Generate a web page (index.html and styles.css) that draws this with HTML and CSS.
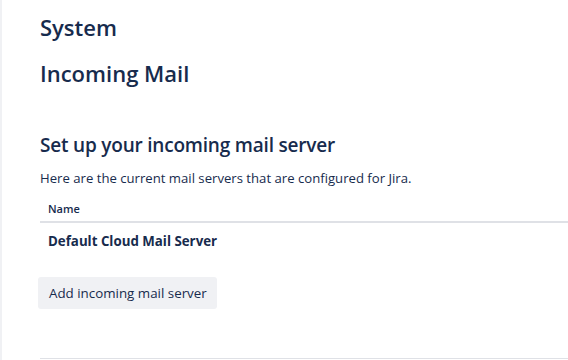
FILE: index.html
```html
<!DOCTYPE html>
<html>
<head>
<meta charset="utf-8">
<link rel="stylesheet" href="styles.css">
</head>
<body>
<div class="page">
  <main class="content">
    <h1 class="title">System</h1>
    <h1 class="title title-sub">Incoming Mail</h1>
    <h2 class="section-title">Set up your incoming mail server</h2>
    <p class="desc">Here are the current mail servers that are configured for Jira.</p>
    <table class="servers">
      <thead>
        <tr><th>Name</th></tr>
      </thead>
      <tbody>
        <tr><td>Default Cloud Mail Server</td></tr>
      </tbody>
    </table>
    <button class="btn">Add incoming mail server</button>
    <hr class="divider">
  </main>
</div>
</body>
</html>
```
FILE: styles.css
```css
html, body {
  margin: 0;
  padding: 0;
  background: #ffffff;
}
body {
  font-family: "Open Sans", "Noto Sans", sans-serif;
  color: #172b4d;
  width: 568px;
  height: 360px;
  overflow: hidden;
}
.page {
  border-left: 2px solid #f0f1f4;
  height: 360px;
  box-sizing: border-box;
}
.content {
  padding: 13px 0 0 38px;
}
.title {
  font-size: 22px;
  font-weight: 600;
  line-height: 28px;
  margin: 0;
  letter-spacing: 0;
}
.title-sub {
  margin-top: 18px;
}
.section-title {
  font-size: 19px;
  font-weight: 600;
  line-height: 24px;
  margin: 46px 0 0;
  letter-spacing: -0.2px;
}
.desc {
  font-size: 13.15px;
  line-height: 20px;
  margin: 11px 0 0;
}
.servers {
  border-collapse: collapse;
  width: calc(100% + 2px);
  margin-top: 9px;
}
.servers th {
  text-align: left;
  font-size: 11px;
  font-weight: 600;
  padding: 4px 8px 4px;
  line-height: 16px;
  border-bottom: 2px solid #dfe1e6;
}
.servers td {
  font-size: 13.3px;
  font-weight: 700;
  padding: 8px 8px;
  line-height: 20px;
}
.btn {
  display: block;
  margin: 18px 0 0 -2px;
  height: 32px;
  padding: 0 10px 0 11px;
  border: none;
  border-radius: 3px;
  background: #f0f1f4;
  color: #172b4d;
  font-family: inherit;
  font-size: 13.35px;
}
.divider {
  margin: 49px 0 0 0;
  border: none;
  border-top: 1px solid #dfe1e6;
}
```
